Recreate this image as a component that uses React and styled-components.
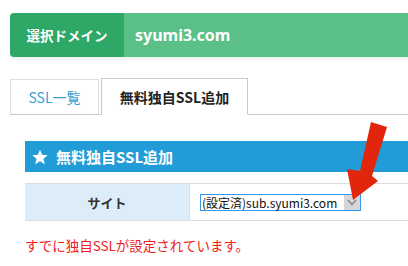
import styled, { createGlobalStyle } from 'styled-components';

const GlobalStyle = createGlobalStyle`
  body {
    margin: 0;
    background: #fff;
    overflow: hidden;
    font-family: "Noto Sans CJK JP", "Noto Sans", sans-serif;
  }
`;

const Page = styled.div`
  width: 440px;
  padding: 13px 0 0 10px;
  position: relative;
`;

const DomainBar = styled.div`
  display: flex;
  height: 44px;
  border-radius: 4px 0 0 4px;
  overflow: hidden;
  box-shadow: 0 3px 3px rgba(0, 0, 0, 0.06);
`;

const DomainLabel = styled.div`
  width: 114px;
  background: #2ea866;
  color: #fff;
  font-weight: bold;
  font-size: 13.5px;
  display: flex;
  align-items: center;
  justify-content: center;
`;

const DomainName = styled.div`
  flex: 1;
  background: #5bbf88;
  color: #fff;
  font-family: "Noto Sans", sans-serif;
  font-weight: bold;
  font-size: 16px;
  display: flex;
  align-items: center;
  padding-left: 11px;
`;

const Tabs = styled.div`
  display: flex;
  align-items: flex-end;
  gap: 2px;
  margin-top: 21px;
  height: 36px;
  border-bottom: 1px solid #c8c8c8;
`;

const Tab = styled.div`
  box-sizing: border-box;
  height: ${(p) => (p.active ? '37px' : '35px')};
  margin-bottom: ${(p) => (p.active ? '-1px' : '0')};
  width: ${(p) => p.w}px;
  border: 1px solid ${(p) => (p.active ? '#c8c8c8' : '#e0e0e0')};
  border-bottom: ${(p) => (p.active ? '1px solid #fff' : 'none')};
  background: #fff;
  color: ${(p) => (p.active ? '#222' : '#3b9fd4')};
  font-weight: ${(p) => (p.active ? 'bold' : 'normal')};
  font-size: 14px;
  display: flex;
  align-items: center;
  justify-content: center;
`;

const Section = styled.div`
  margin: 26px 0 0 15px;
`;

const SectionHead = styled.div`
  height: 31px;
  background: #229cd7;
  color: #fff;
  font-weight: bold;
  font-size: 15px;
  display: flex;
  align-items: center;
  gap: 8px;
  padding-left: 7px;
`;

const Row = styled.div`
  display: flex;
  margin-top: 11px;
  height: 38px;
  border-top: 1px solid #ddd;
  border-bottom: 1px solid #ddd;
  box-sizing: border-box;
`;

const LabelCell = styled.div`
  width: 164px;
  background: #dcedf9;
  border-right: 1px solid #ddd;
  font-weight: bold;
  font-size: 13px;
  color: #333;
  display: flex;
  align-items: center;
  justify-content: center;
`;

const ValueCell = styled.div`
  flex: 1;
  display: flex;
  align-items: center;
  padding-left: 10px;
`;

const Select = styled.div`
  box-sizing: border-box;
  width: 161px;
  height: 17px;
  border: 1px solid #3399ee;
  display: flex;
  align-items: center;
  font-size: 12px;
  color: #111;
  padding-left: 1px;
`;

const SelectText = styled.span`
  flex: 1;
  white-space: nowrap;
  overflow: hidden;
`;

const DropButton = styled.div`
  width: 16px;
  height: 15px;
  background: #d6d6d6;
  display: flex;
  align-items: center;
  justify-content: center;
`;

const Notice = styled.div`
  margin-top: 14px;
  color: #ee1c1c;
  font-size: 13.5px;
`;

const Arrow = styled.svg`
  position: absolute;
  left: 0;
  top: 0;
  pointer-events: none;
`;

const App = () => {
  return (
    <>
      <GlobalStyle />
      <Page>
        <DomainBar>
          <DomainLabel>選択ドメイン</DomainLabel>
          <DomainName>syumi3.com</DomainName>
        </DomainBar>
        <Tabs>
          <Tab w={89}>SSL一覧</Tab>
          <Tab w={147} active>
            無料独自SSL追加
          </Tab>
        </Tabs>
        <Section>
          <SectionHead>
            <svg width="16" height="16" viewBox="0 0 24 24">
              <path
                fill="#fff"
                d="M12 1l3.2 7.6 8.3.6-6.3 5.4 2 8.1L12 18.4 4.8 22.7l2-8.1L.5 9.2l8.3-.6z"
              />
            </svg>
            無料独自SSL追加
          </SectionHead>
          <Row>
            <LabelCell>サイト</LabelCell>
            <ValueCell>
              <Select>
                <SelectText>(設定済)sub.syumi3.com</SelectText>
                <DropButton>
                  <svg width="10" height="7" viewBox="0 0 10 7">
                    <path d="M1 1L5 5.5L9 1" fill="none" stroke="#8a8a8a" strokeWidth="1.6" />
                  </svg>
                </DropButton>
              </Select>
            </ValueCell>
          </Row>
          <Notice>すでに独自SSLが設定されています。</Notice>
        </Section>
        <Arrow width="408" height="266">
          <polygon
            fill="#e2260c"
            points="371,122 387,127 372,176 378,181 353,200 347,169 360,171"
          />
        </Arrow>
      </Page>
    </>
  );
};

export default App;
